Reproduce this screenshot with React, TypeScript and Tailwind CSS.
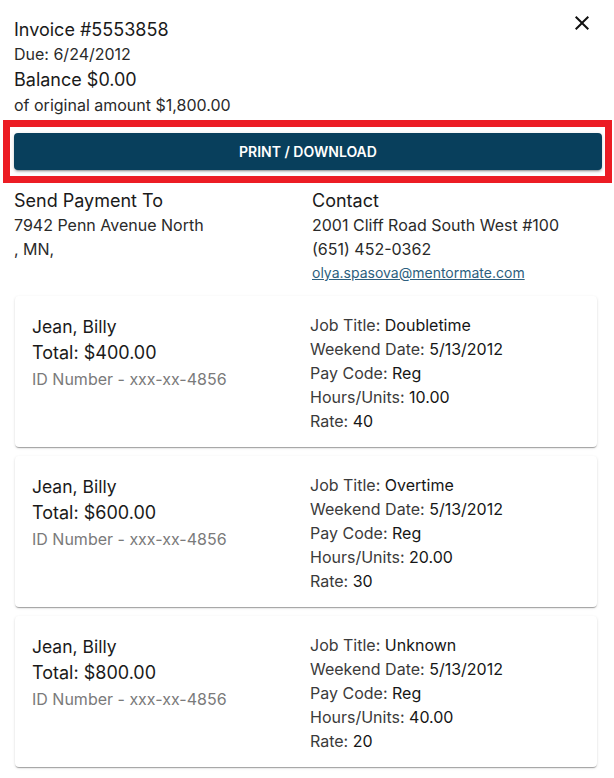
import React from "react";

type Line = { name: string; total: string; job: string; hours: string; rate: string };

const LINES: Line[] = [
  { name: "Jean, Billy", total: "$400.00", job: "Doubletime", hours: "10.00", rate: "40" },
  { name: "Jean, Billy", total: "$600.00", job: "Overtime", hours: "20.00", rate: "30" },
  { name: "Jean, Billy", total: "$800.00", job: "Unknown", hours: "40.00", rate: "20" },
];

function CloseIcon() {
  return (
    <svg viewBox="0 0 24 24" className="h-6 w-6" fill="#111">
      <path d="M19 6.41 17.59 5 12 10.59 6.41 5 5 6.41 10.59 12 5 17.59 6.41 19 12 13.41 17.59 19 19 17.59 13.41 12z" />
    </svg>
  );
}

function Field({ label, value }: { label: string; value: string }) {
  return (
    <div className="leading-[24px]">
      <span className="text-[#3b3b3b]">{label}: </span>
      <span className="text-[#161616]">{value}</span>
    </div>
  );
}

function LineCard({ line }: { line: Line }) {
  return (
    <div className="flex rounded-[4px] bg-white pb-[14px] pl-[17px] pt-[17px] shadow-[0_2px_1px_-1px_rgba(0,0,0,0.2),0_1px_1px_0_rgba(0,0,0,0.14),0_1px_3px_0_rgba(0,0,0,0.12)]">
      <div className="w-[278px] pt-[1px]">
        <div className="text-[17.5px] leading-[26px] text-[#1a1a1a]">{line.name}</div>
        <div className="text-[18px] leading-[26px] text-[#1a1a1a]">Total: {line.total}</div>
        <div className="text-[16px] leading-[26px] text-[#7a7a7a]">ID Number - xxx-xx-4856</div>
      </div>
      <div className="text-[16px]">
        <Field label="Job Title" value={line.job} />
        <Field label="Weekend Date" value="5/13/2012" />
        <Field label="Pay Code" value="Reg" />
        <Field label="Hours/Units" value={line.hours} />
        <Field label="Rate" value={line.rate} />
      </div>
    </div>
  );
}

export default function App() {
  return (
    <div className="h-[778px] w-[614px] overflow-hidden bg-white font-['Inter',sans-serif] text-[#1a1a1a]">
      <div className="flex justify-between pl-[14px] pr-[20px] pt-[17px]">
        <div>
          <div className="text-[18px] leading-[25px]">Invoice #5553858</div>
          <div className="text-[16px] leading-[25px] text-[#2a2a2a]">Due: 6/24/2012</div>
          <div className="text-[18px] leading-[25px]">Balance $0.00</div>
          <div className="text-[16px] leading-[26px] text-[#2a2a2a]">of original amount $1,800.00</div>
        </div>
        <button className="-mt-[6px] h-6 w-6">
          <CloseIcon />
        </button>
      </div>

      <div className="ml-[3px] mr-[2px] mt-[2px] border-[7px] border-[#ec1c24] pb-[6px] pl-1 pr-[3px] pt-[6px]">
        <button className="flex h-[37px] w-full items-center justify-center rounded-[4px] bg-[#083f5c] text-[14px] font-semibold text-white shadow-[0_3px_1px_-2px_rgba(0,0,0,0.2),0_2px_2px_0_rgba(0,0,0,0.14),0_1px_5px_0_rgba(0,0,0,0.12)]">
          PRINT / DOWNLOAD
        </button>
      </div>

      <div className="flex pl-[14px] pt-[5px]">
        <div className="w-[298px]">
          <div className="text-[18px] leading-[25px]">Send Payment To</div>
          <div className="text-[16px] leading-[24px] text-[#2a2a2a]">7942 Penn Avenue North</div>
          <div className="text-[16px] leading-[24px] text-[#2a2a2a]">, MN,</div>
        </div>
        <div>
          <div className="text-[18px] leading-[25px]">Contact</div>
          <div className="text-[16px] leading-[24px] text-[#2a2a2a]">2001 Cliff Road South West #100</div>
          <div className="text-[16px] leading-[24px] text-[#2a2a2a]">(651) 452-0362</div>
          <a href="#" className="block text-[14px] leading-[24px] text-[#2d5f7e] underline">
            olya.spasova@mentormate.com
          </a>
        </div>
      </div>

      <div className="ml-[15px] mr-[17px] mt-[11px] flex flex-col gap-[9px]">
        {LINES.map((l, i) => (
          <LineCard key={i} line={l} />
        ))}
      </div>
    </div>
  );
}
